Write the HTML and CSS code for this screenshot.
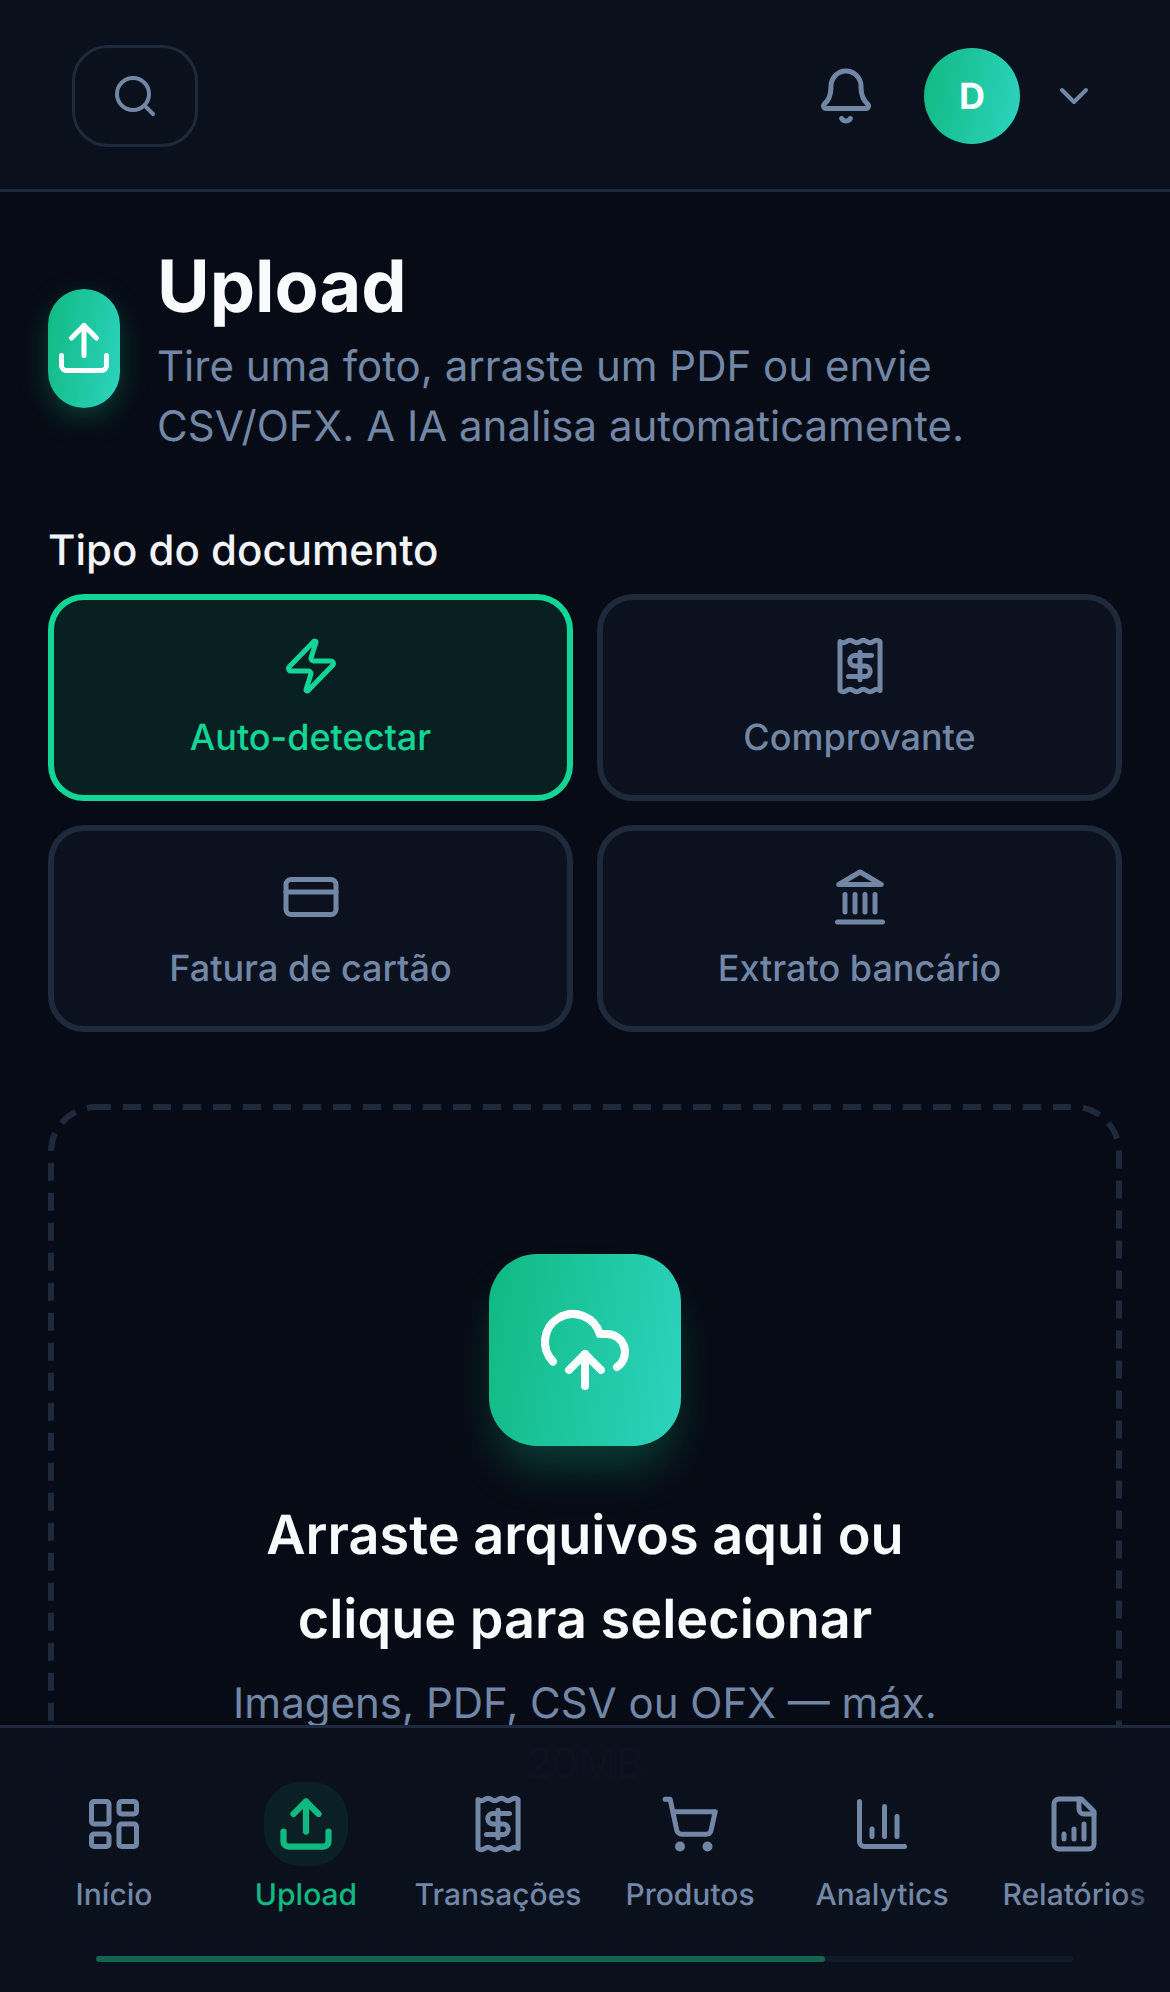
FILE: index.html
```html
<!DOCTYPE html>
<html lang="pt-BR">
  <head>
    <meta charset="UTF-8">
    <meta name="viewport" content="width=device-width, initial-scale=1.0">
    <title>Upload</title>
    <link rel="stylesheet" href="styles.css">
  </head>
  <body>

    <header class="topbar">
      <button class="search-btn" type="button">
        <svg class="icon-sm" viewBox="0 0 24 24"><circle cx="11" cy="11" r="8"/><path d="m21 21-4.3-4.3"/></svg>
      </button>
      <div class="topbar-right">
        <svg class="icon" viewBox="0 0 24 24"><path d="M10.268 21a2 2 0 0 0 3.464 0"/><path d="M3.262 15.326A1 1 0 0 0 4 17h16a1 1 0 0 0 .74-1.673C19.41 13.956 18 12.499 18 8A6 6 0 0 0 6 8c0 4.499-1.411 5.956-2.738 7.326"/></svg>
        <div class="avatar">D</div>
        <svg class="icon-sm chevron" viewBox="0 0 24 24"><path d="m6 9 6 6 6-6"/></svg>
      </div>
    </header>

    <main class="content">
      <section class="page-head">
        <div class="page-icon">
          <svg class="icon" viewBox="0 0 24 24"><path d="M21 15v4a2 2 0 0 1-2 2H5a2 2 0 0 1-2-2v-4"/><path d="m17 8-5-5-5 5"/><path d="M12 3v12"/></svg>
        </div>
        <div class="page-text">
          <h1>Upload</h1>
          <p>Tire uma foto, arraste um PDF ou envie CSV/OFX. A IA analisa automaticamente.</p>
        </div>
      </section>

      <h2 class="section-label">Tipo do documento</h2>
      <div class="doc-types">
        <button class="doc-card is-active" type="button">
          <svg class="icon" viewBox="0 0 24 24"><path d="M4 14a1 1 0 0 1-.78-1.63l9.9-10.2a.5.5 0 0 1 .86.46l-1.92 6.02A1 1 0 0 0 13 10h7a1 1 0 0 1 .78 1.63l-9.9 10.2a.5.5 0 0 1-.86-.46l1.92-6.02A1 1 0 0 0 11 14z"/></svg>
          <span>Auto-detectar</span>
        </button>
        <button class="doc-card" type="button">
          <svg class="icon" viewBox="0 0 24 24"><path d="M4 2.2q1.33 1 2.67 0t2.67 0 2.67 0 2.67 0 2.67 0 2.67 0V21.8q-1.33-1-2.67 0t-2.67 0-2.67 0-2.67 0-2.67 0-2.67 0Z"/><path d="M16.6 7.8H10a2.1 2.1 0 0 0 0 4.2h4a2.1 2.1 0 0 1 0 4.2H7.4"/><path d="M12 6.5v11"/></svg>
          <span>Comprovante</span>
        </button>
        <button class="doc-card" type="button">
          <svg class="icon" viewBox="0 0 24 24"><rect x="2" y="5" width="20" height="14" rx="2"/><path d="M2 10h20"/></svg>
          <span>Fatura de cartão</span>
        </button>
        <button class="doc-card" type="button">
          <svg class="icon" viewBox="0 0 24 24"><path d="M3 22h18"/><path d="M6 18v-7"/><path d="M10 18v-7"/><path d="M14 18v-7"/><path d="M18 18v-7"/><path d="M12 2l8.5 5h-17z"/></svg>
          <span>Extrato bancário</span>
        </button>
      </div>

      <section class="dropzone">
        <svg class="dropzone-dash"><rect/></svg>
        <div class="drop-icon">
          <svg viewBox="0 0 24 24"><path d="M12 13v8"/><path d="M4 14.899A7 7 0 1 1 15.71 8h1.79a4.5 4.5 0 0 1 2.5 8.242"/><path d="m8 17 4-4 4 4"/></svg>
        </div>
        <h3>Arraste arquivos aqui ou clique para selecionar</h3>
        <p>Imagens, PDF, CSV ou OFX — máx. 20MB</p>
      </section>
    </main>

    <nav class="bottom-nav">
      <div class="nav-items">
        <a class="nav-item">
          <span class="nav-icon"><svg class="icon" viewBox="0 0 24 24"><rect x="3" y="3" width="7" height="9" rx="1"/><rect x="14" y="3" width="7" height="5" rx="1"/><rect x="14" y="12" width="7" height="9" rx="1"/><rect x="3" y="16" width="7" height="5" rx="1"/></svg></span>
          Início
        </a>
        <a class="nav-item is-active">
          <span class="nav-icon"><svg class="icon" viewBox="0 0 24 24"><path d="M21 15v4a2 2 0 0 1-2 2H5a2 2 0 0 1-2-2v-4"/><path d="m17 8-5-5-5 5"/><path d="M12 3v12"/></svg></span>
          Upload
        </a>
        <a class="nav-item">
          <span class="nav-icon"><svg class="icon" viewBox="0 0 24 24"><path d="M4 2.2q1.33 1 2.67 0t2.67 0 2.67 0 2.67 0 2.67 0 2.67 0V21.8q-1.33-1-2.67 0t-2.67 0-2.67 0-2.67 0-2.67 0-2.67 0Z"/><path d="M16.6 7.8H10a2.1 2.1 0 0 0 0 4.2h4a2.1 2.1 0 0 1 0 4.2H7.4"/><path d="M12 6.5v11"/></svg></span>
          Transações
        </a>
        <a class="nav-item">
          <span class="nav-icon"><svg class="icon" viewBox="0 0 24 24"><circle cx="8" cy="21" r="1"/><circle cx="19" cy="21" r="1"/><path d="M2.05 2.05h2l2.66 12.42a2 2 0 0 0 2 1.58h9.78a2 2 0 0 0 1.95-1.57l1.65-7.43H5.12"/></svg></span>
          Produtos
        </a>
        <a class="nav-item">
          <span class="nav-icon"><svg class="icon" viewBox="0 0 24 24"><path d="M3 3v16a2 2 0 0 0 2 2h16"/><path d="M18 17V9"/><path d="M13 17V5"/><path d="M8 17v-3"/></svg></span>
          Analytics
        </a>
        <a class="nav-item">
          <span class="nav-icon"><svg class="icon" viewBox="0 0 24 24"><path d="M15 2H6a2 2 0 0 0-2 2v16a2 2 0 0 0 2 2h12a2 2 0 0 0 2-2V7Z"/><path d="M14 2v4a2 2 0 0 0 2 2h4"/><path d="M8 18v-2"/><path d="M12 18v-4"/><path d="M16 18v-6"/></svg></span>
          Relatórios
        </a>
      </div>
      <div class="nav-track"><div class="nav-thumb"></div></div>
    </nav>

  </body>
</html>
```

FILE: styles.css
```css
/* Base */
body {
  position: relative;
  display: flex;
  flex-direction: column;
  height: 1992px;
  margin: 0;
  overflow: hidden;
  font-family: 'Inter', sans-serif;
  text-rendering: geometricPrecision;
  color: #f8fafc;
  background-color: #070b15;
}

svg {
  fill: none;
  stroke: currentColor;
  stroke-linecap: round;
  stroke-linejoin: round;
  stroke-width: 2;
}

.icon {
  display: block;
  width: 60px;
  height: 60px;
  flex: none;
}

.icon-sm {
  display: block;
  width: 48px;
  height: 48px;
  flex: none;
}

button {
  font-family: inherit;
  text-rendering: inherit;
  cursor: pointer;
}

/* Top bar */
.topbar {
  display: flex;
  flex: none;
  align-items: center;
  justify-content: space-between;
  box-sizing: border-box;
  height: 192px;
  padding: 3px 72px 0;
  color: #7287a6;
  background-color: #0a111c;
  border-bottom: 3px solid #1e293b;
}

.search-btn {
  display: flex;
  align-items: center;
  justify-content: center;
  width: 126px;
  height: 102px;
  padding: 0;
  color: inherit;
  background: transparent;
  border: 3px solid #1e293b;
  border-radius: 36px;
}

.topbar-right {
  display: flex;
  align-items: center;
}

.avatar {
  display: flex;
  align-items: center;
  justify-content: center;
  width: 96px;
  height: 96px;
  margin-left: 48px;
  font-size: 36px;
  font-weight: 700;
  color: #fff;
  background: linear-gradient(100deg, #10b981, #2dd4bf);
  border-radius: 50%;
}

.chevron {
  margin-left: 30px;
}

/* Page heading */
.content {
  flex: 1;
  padding: 0 48px;
}

.page-head {
  display: flex;
  align-items: center;
  gap: 37px;
  margin-top: 47px;
}

.page-icon {
  display: flex;
  flex: none;
  align-items: center;
  justify-content: center;
  width: 72px;
  height: 119px;
  color: #fff;
  background: linear-gradient(100deg, #10b981, #2dd4bf);
  border-radius: 36px;
  box-shadow: 0 10px 30px -3px rgba(16, 185, 129, 0.35);
}

.page-text h1 {
  margin: 0;
  font-size: 72px;
  font-weight: 700;
  line-height: 96px;
  color: #f8fafc;
}

.page-text p {
  margin: 2px 0 0;
  font-size: 42px;
  line-height: 60px;
  color: #7287a6;
}

/* Document type */
.section-label {
  margin: 64px 0 13px;
  font-size: 42px;
  font-weight: 500;
  line-height: 60px;
  color: #f1f5f9;
}

.doc-types {
  display: grid;
  grid-template-columns: 1fr 1fr;
  gap: 24px;
}

.doc-card {
  display: flex;
  flex-direction: column;
  align-items: center;
  box-sizing: border-box;
  height: 207px;
  padding: 36px 12px 0;
  font-size: 36px;
  font-weight: 500;
  line-height: 48px;
  color: #7287a6;
  background-color: #0b111e;
  border: 6px solid #1e293b;
  border-radius: 36px;
}

.doc-card span {
  margin-top: 17px;
}

.doc-card.is-active {
  color: #12d596;
  background-color: #092023;
  border-color: #12d596;
}

/* Drop zone */
.dropzone {
  position: relative;
  display: flex;
  flex-direction: column;
  align-items: center;
  margin-top: 72px;
  padding: 150px 162px;
  text-align: center;
}

.dropzone-dash {
  position: absolute;
  top: 0;
  left: 0;
  width: 100%;
  height: 100%;
}

.dropzone-dash rect {
  x: 3px;
  y: 3px;
  width: calc(100% - 6px);
  height: calc(100% - 6px);
  rx: 45px;
  stroke: #1e293b;
  stroke-width: 6;
  stroke-linecap: butt;
  stroke-dasharray: 18 12;
  stroke-dashoffset: 3;
}

.drop-icon {
  display: flex;
  align-items: center;
  justify-content: center;
  width: 192px;
  height: 192px;
  color: #fff;
  background: linear-gradient(100deg, #10b981, #2dd4bf);
  border-radius: 48px;
  box-shadow: 0 30px 45px -9px rgba(16, 185, 129, 0.3);
}

.drop-icon svg {
  width: 96px;
  height: 96px;
}

.dropzone h3 {
  margin: 48px 0 12px;
  font-size: 54px;
  font-weight: 600;
  line-height: 84px;
  color: #f8fafc;
}

.dropzone p {
  margin: 0;
  font-size: 42px;
  line-height: 60px;
  color: #7287a6;
}

/* Bottom nav, sits over the page */
.bottom-nav {
  position: absolute;
  left: 0;
  right: 0;
  bottom: 0;
  box-sizing: border-box;
  height: 267px;
  padding-top: 54px;
  color: #7287a6;
  background-color: rgba(10, 16, 29, 0.98);
  border-top: 3px solid #1e293b;
}

.bottom-nav::after {
  content: '';
  position: absolute;
  top: 3px;
  right: 0;
  bottom: 0;
  width: 48px;
  background: linear-gradient(to right, rgba(10, 16, 29, 0), #0a101d);
}

.nav-items {
  display: flex;
  padding-left: 18px;
}

.nav-item {
  display: flex;
  flex: 0 0 192px;
  flex-direction: column;
  align-items: center;
  gap: 5px;
  font-size: 30px;
  font-weight: 500;
  line-height: 48px;
  white-space: nowrap;
}

.nav-icon {
  display: flex;
  align-items: center;
  justify-content: center;
  width: 84px;
  height: 84px;
  border-radius: 36px;
}

.nav-item.is-active {
  color: #10b981;
}

.nav-item.is-active .nav-icon {
  background-color: #0a2024;
}

.nav-item.is-active svg {
  stroke-width: 2.5;
}

.nav-track {
  width: 977px;
  height: 6px;
  margin: 37px 0 0 96px;
  background-color: #121a28;
  border-radius: 3px;
}

.nav-thumb {
  width: 729px;
  height: 6px;
  background-color: #14644f;
  border-radius: 3px;
}
```
